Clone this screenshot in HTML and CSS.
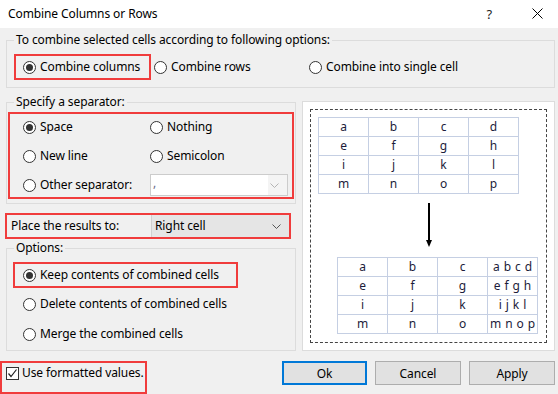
FILE: index.html
```html
<!DOCTYPE html>
<html lang="en">
<head>
    <meta charset="UTF-8">
    <title>Combine Columns or Rows</title>
    <link rel="stylesheet" href="styles.css">
</head>
<body>
<div class="dialog">
    <div class="titlebar">
        <span class="title">Combine Columns or Rows</span>
        <span class="help">?</span>
        <svg class="close" width="11" height="11" viewBox="0 0 11 11">
            <path d="M0.5 0.5L10.5 10.5M10.5 0.5L0.5 10.5" stroke="#000" stroke-width="1" fill="none"/>
        </svg>
    </div>
    <div class="content">
        <fieldset class="group group-mode">
            <legend>To combine selected cells according to following options:</legend>
            <div class="mode-row">
                <label class="opt hl hl-mode"><span class="radio on"></span>Combine columns</label>
                <label class="opt opt-rows"><span class="radio"></span>Combine rows</label>
                <label class="opt"><span class="radio"></span>Combine into single cell</label>
            </div>
        </fieldset>

        <div class="main">
            <div class="left">
                <fieldset class="group group-sep">
                    <legend>Specify a separator:</legend>
                    <div class="hl hl-sep">
                        <label class="opt"><span class="radio on"></span>Space</label>
                        <label class="opt"><span class="radio"></span>Nothing</label>
                        <label class="opt"><span class="radio"></span>New line</label>
                        <label class="opt"><span class="radio"></span>Semicolon</label>
                        <label class="opt"><span class="radio"></span>Other separator:</label>
                        <div class="combo combo-sep">
                            <span class="combo-field">,</span>
                            <svg class="chevron" width="9" height="5" viewBox="0 0 9 5">
                                <polyline points="0.5,0.5 4.5,4.5 8.5,0.5" fill="none" stroke="#b4b4b4" stroke-width="1"/>
                            </svg>
                        </div>
                    </div>
                </fieldset>

                <div class="hl place-row">
                    <span class="place-label">Place the results to:</span>
                    <div class="combo combo-place">
                        <span class="combo-text">Right cell</span>
                        <svg class="chevron" width="9" height="5" viewBox="0 0 9 5">
                            <polyline points="0.5,0.5 4.5,4.5 8.5,0.5" fill="none" stroke="#555" stroke-width="1"/>
                        </svg>
                    </div>
                </div>

                <fieldset class="group group-opts">
                    <legend>Options:</legend>
                    <label class="opt hl hl-keep"><span class="radio on"></span>Keep contents of combined cells</label>
                    <label class="opt opt-line"><span class="radio"></span>Delete contents of combined cells</label>
                    <label class="opt opt-line"><span class="radio"></span>Merge the combined cells</label>
                </fieldset>
            </div>

            <div class="panel">
                <div class="preview">
                    <div class="grid grid-before">
                        <span>a</span><span>b</span><span>c</span><span>d</span>
                        <span>e</span><span>f</span><span>g</span><span>h</span>
                        <span>i</span><span>j</span><span>k</span><span>l</span>
                        <span>m</span><span>n</span><span>o</span><span>p</span>
                    </div>
                    <svg class="arrow" width="10" height="44" viewBox="0 0 10 44">
                        <line x1="5" y1="0" x2="5" y2="38" stroke="#000" stroke-width="2"/>
                        <polygon points="2,37 8,37 5,44" fill="#000"/>
                    </svg>
                    <div class="grid grid-after">
                        <span>a</span><span>b</span><span>c</span><span class="joined">a b c d</span>
                        <span>e</span><span>f</span><span>g</span><span class="joined">e f g h</span>
                        <span>i</span><span>j</span><span>k</span><span class="joined">i j k l</span>
                        <span>m</span><span>n</span><span>o</span><span class="joined">m n o p</span>
                    </div>
                </div>
            </div>
        </div>

        <div class="footer">
            <label class="hl hl-check">
                <span class="checkbox">
                    <svg width="11" height="11" viewBox="0 0 11 11">
                        <polyline points="1.5,5.5 4,8.5 9.5,1.5" fill="none" stroke="#222" stroke-width="1.2"/>
                    </svg>
                </span>
                Use formatted values.
            </label>
            <div class="buttons">
                <button class="btn btn-default">Ok</button>
                <button class="btn">Cancel</button>
                <button class="btn">Apply</button>
            </div>
        </div>
    </div>
</div>
</body>
</html>
```

FILE: styles.css
```css
*{
    margin: 0;
    padding: 0;
    box-sizing: border-box;
}
body{
    background: #f0f0f0;
    font-family: "Noto Sans", "Open Sans", sans-serif;
    font-size: 12px;
    line-height: 16px;
    letter-spacing: -0.1px;
    color: #000;
}
.dialog{
    width: 558px;
    height: 394px;
    overflow: hidden;
}
.titlebar{
    height: 28px;
    background: #fff;
    display: flex;
    align-items: center;
    padding-bottom: 1px;
}
.titlebar .title{
    padding-left: 8px;
}
.titlebar .help{
    margin-left: auto;
    font-size: 13px;
    color: #222;
}
.titlebar .close{
    margin: 0 15px 0 40px;
}
.content{
    padding: 0 3px 0 6px;
}

/* group boxes */
.group{
    border: 1px solid #dcdcdc;
    min-width: 0;
}
.group legend{
    margin-left: 7px;
    padding: 0 2px;
    line-height: 16px;
}
.group-mode{
    margin-top: 4px;
}
.hl{
    border: 2px solid #f03c3c;
}
.opt{
    display: flex;
    align-items: center;
    gap: 4px;
    white-space: nowrap;
}
.radio{
    width: 13px;
    height: 13px;
    border: 1px solid #333;
    border-radius: 50%;
    background: #fff;
    display: flex;
    align-items: center;
    justify-content: center;
    flex: none;
}
.radio.on::after{
    content: "";
    width: 7px;
    height: 7px;
    border-radius: 50%;
    background: #333;
}

.mode-row{
    display: flex;
    padding: 6px 0 7px 7px;
}
.hl-mode{
    width: 137px;
    height: 26px;
    padding-left: 7px;
}
.opt-rows{
    width: 155px;
    margin-left: 3px;
}

/* main area */
.main{
    display: flex;
    gap: 6px;
    margin-top: 6px;
}
.left{
    width: 290px;
    flex: none;
}
.group-sep{
    padding-bottom: 4px;
}
.hl-sep{
    margin: 2px 1px 0;
    height: 87px;
    padding: 2px 0 0 13px;
    display: grid;
    grid-template-columns: 127px 138px;
    grid-auto-rows: 22px;
    row-gap: 7px;
}
.combo{
    display: flex;
    align-items: center;
    justify-content: space-between;
}
.combo-sep{
    border: 1px solid #cccccc;
    background: #f4f4f4;
    padding-right: 8px;
}
.combo-field{
    width: 117px;
    height: 20px;
    background: #fff;
    color: #6a6a8a;
    padding-left: 2px;
}
.place-row{
    margin: 9px 0 0 -1px;
    width: 286px;
    height: 26px;
    display: flex;
    align-items: center;
}
.place-label{
    padding-left: 4px;
}
.combo-place{
    margin-left: auto;
    width: 138px;
    height: 22px;
    background: #e5e5e5;
    border-left: 1px solid #d0d0d0;
    padding: 0 8px 0 3px;
}
.group-opts{
    margin-top: 1px;
    padding-bottom: 1px;
}
.hl-keep{
    margin: 6px 0 0 6px;
    width: 225px;
    height: 26px;
    padding-left: 8px;
}
.opt-line{
    height: 30px;
    padding-left: 16px;
}
.hl-keep + .opt-line{
    margin-top: 1px;
}

/* preview panel */
.panel{
    flex: 1;
    margin-top: 7px;
    border: 1px solid #dcdcdc;
    background: #fff;
    padding: 7px;
    display: flex;
}
.preview{
    flex: 1;
    border: 1px dashed #444;
    display: flex;
    flex-direction: column;
}
.grid{
    display: grid;
    grid-template-columns: repeat(4, 50px);
    grid-auto-rows: 19px;
    border-left: 1px solid #c5cfe3;
    border-top: 1px solid #c5cfe3;
    width: 201px;
}
.grid span{
    border-right: 1px solid #c5cfe3;
    border-bottom: 1px solid #c5cfe3;
    text-align: center;
    line-height: 18px;
    color: #1c1c3a;
    white-space: nowrap;
}
.grid span.joined{
    word-spacing: 1px;
}
.grid-before{
    margin: 7px 0 0 7px;
}
.arrow{
    align-self: center;
    margin-top: 9px;
}
.grid-after{
    align-self: flex-end;
    margin: 10px 8px 0 0;
}

/* footer */
.footer{
    display: flex;
    align-items: flex-start;
    margin-top: 10px;
}
.hl-check{
    margin-left: -6px;
    width: 147px;
    height: 33px;
    padding: 0 0 9px 4px;
    display: flex;
    align-items: center;
    gap: 3px;
    white-space: nowrap;
}
.checkbox{
    width: 13px;
    height: 13px;
    border: 1px solid #333;
    background: #fff;
    display: flex;
    align-items: center;
    justify-content: center;
    flex: none;
}
.buttons{
    margin-left: auto;
    display: flex;
    gap: 8px;
}
.btn{
    width: 86px;
    height: 24px;
    background: #e1e1e1;
    border: 1px solid #adadad;
    font-family: inherit;
    font-size: 12px;
    letter-spacing: -0.1px;
    color: #000;
}
.btn-default{
    width: 85px;
    border: 2px solid #0078d7;
}
```
